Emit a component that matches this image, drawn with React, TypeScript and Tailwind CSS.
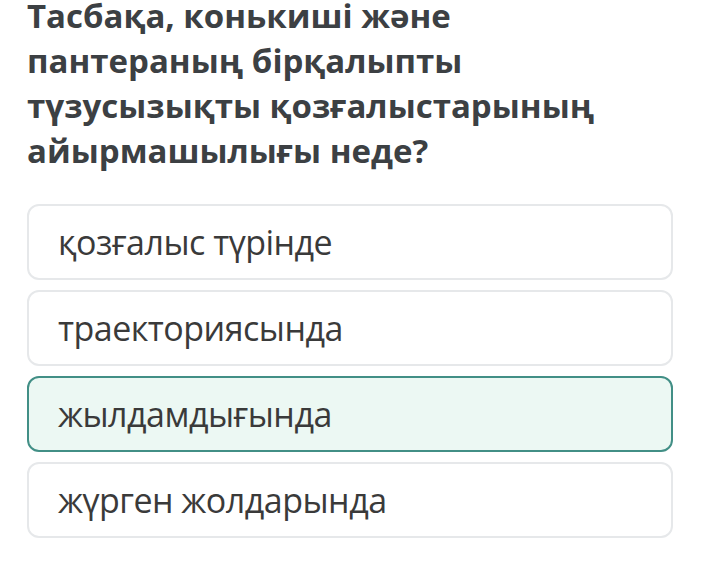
import React from 'react';

const options = [
    { text: 'қозғалыс түрінде', selected: false },
    { text: 'траекториясында', selected: false },
    { text: 'жылдамдығында', selected: true },
    { text: 'жүрген жолдарында', selected: false },
];

export default function App() {
    return (
        <div className="w-[710px] h-[572px] overflow-hidden bg-white pl-[27px] pr-[37px] font-['Open_Sans',sans-serif]">
            {/* Question */}
            <h1 className="mt-[-7px] text-[33px] leading-[45px] font-bold text-[#3c4043]">
                Тасбақа, конькиші және
                <br />
                пантераның бірқалыпты
                <br />
                түзусызықты қозғалыстарының
                <br />
                айырмашылығы неде?
            </h1>

            {/* Answers */}
            <div className="mt-[31px] flex flex-col gap-[10px]">
                {options.map((o) => (
                    <div
                        key={o.text}
                        className={
                            o.selected
                                ? 'h-[76px] rounded-[12px] border-2 border-[#428f86] bg-[#ecf8f3] px-[29px] flex items-center'
                                : 'h-[76px] rounded-[12px] border-2 border-[#e6e8ea] bg-white px-[29px] flex items-center'
                        }
                    >
                        <span className="text-[34px] leading-none tracking-[-0.5px] text-[#3a3a3a]">{o.text}</span>
                    </div>
                ))}
            </div>
        </div>
    );
}
